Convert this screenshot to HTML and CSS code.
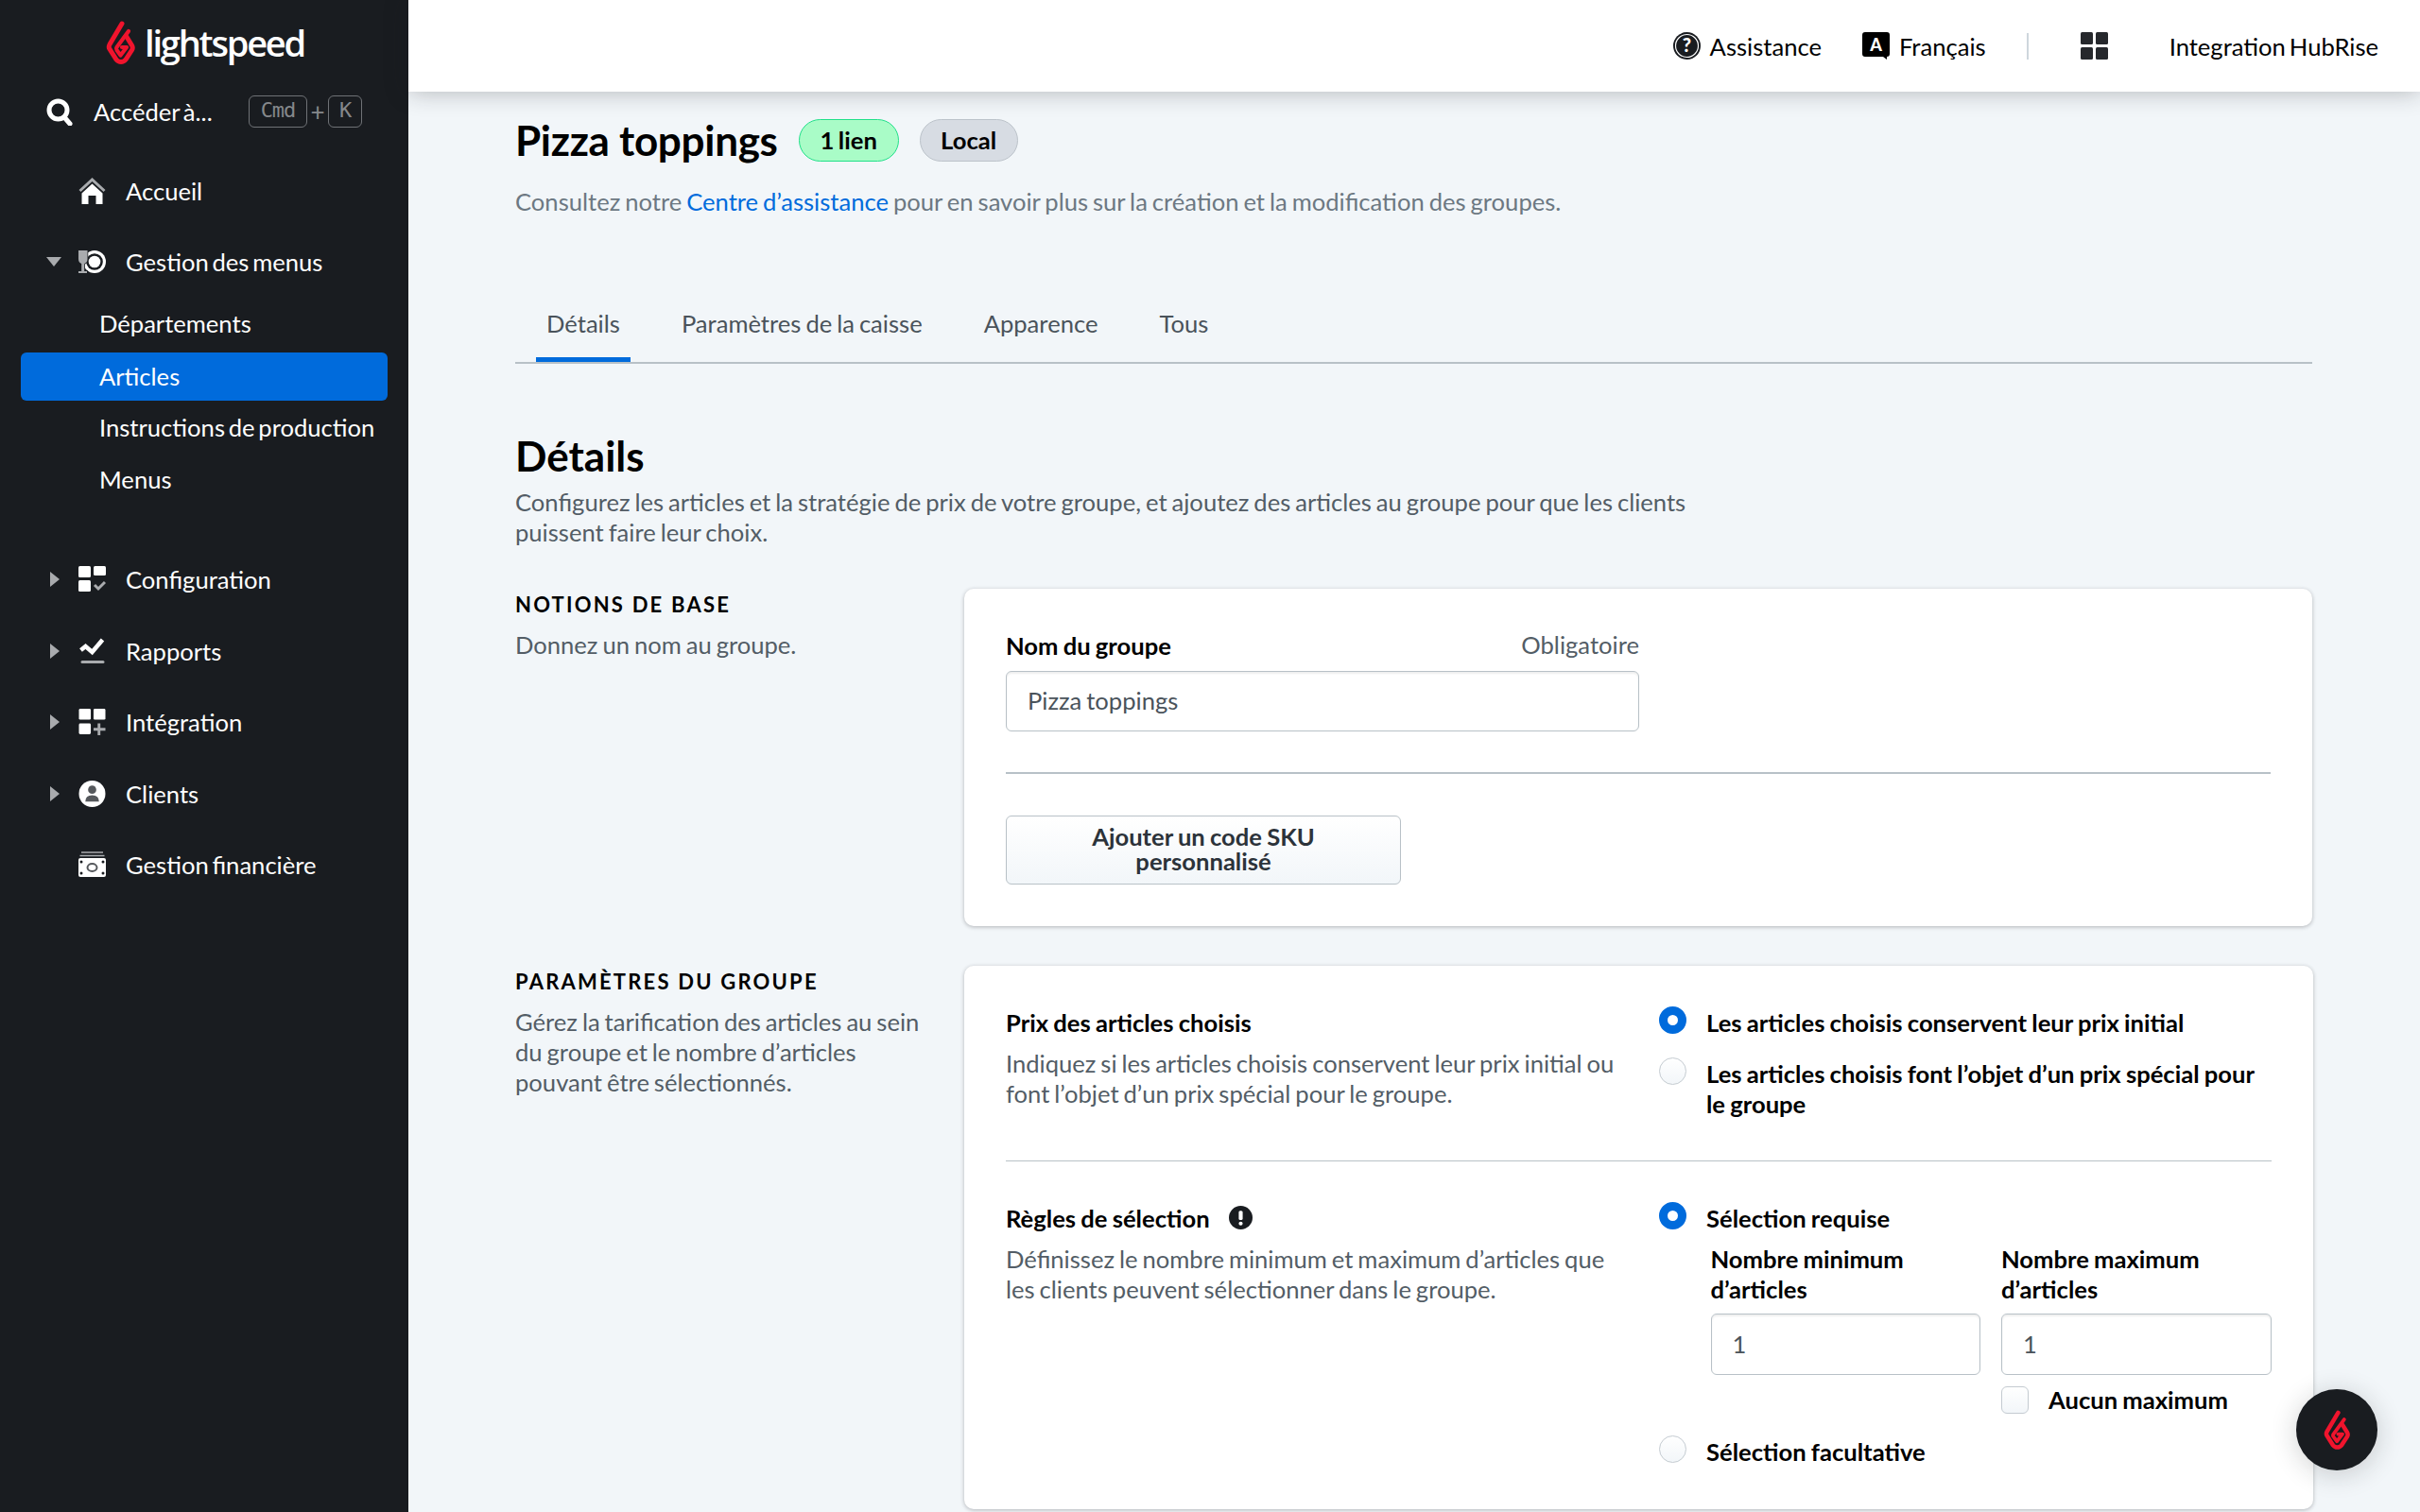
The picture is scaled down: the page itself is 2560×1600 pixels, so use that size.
FILE: index.html
```html
<!DOCTYPE html>
<html lang="fr">
<head>
<meta charset="utf-8">
<title>Pizza toppings</title>
<link rel="stylesheet" href="styles.css">
</head>
<body>
<aside class="sidebar">
  <div class="logo">
    <svg class="flame" viewBox="0 0 32 46"><path d="M17 3 4 25q-1.500 3 0 5l7 11q2 2.500 5 2.500t5-2.500l6.500-10q1.500-2.500 0-5L22 17" fill="none" stroke="#f0142d" stroke-width="5" stroke-linecap="round"/><path d="M24 11 11.500 28q-1 1.500 0 3l4 5.500L22 28h-5" fill="none" stroke="#f0142d" stroke-width="4.200" stroke-linecap="round" stroke-linejoin="round"/></svg>
    <span class="logo-text">lightspeed</span>
  </div>
  <div class="search">
    <svg class="search-icon" viewBox="0 0 28 29"><circle cx="12.500" cy="12.500" r="9.500" fill="none" stroke="#fff" stroke-width="5"/><path d="m19 20 6 7" stroke="#fff" stroke-width="5" stroke-linecap="round"/></svg>
    <span class="search-text">Accéder à...</span>
    <span class="kbd kbd-cmd">Cmd</span><span class="plus">+</span><span class="kbd kbd-k">K</span>
  </div>
  <nav class="nav">
    <a class="nav-row"><span class="caret"></span>
      <svg class="nav-icon" viewBox="0 0 28 28"><path d="M14 0 0 13l2 2L14 4l12 11 2-2z" fill="#a9abae"/><path d="M14 6.500 3 16.500V28h7v-9h8v9h7V16.500z" fill="#fff"/></svg>
      <span>Accueil</span></a>
    <a class="nav-row"><span class="caret down"></span>
      <svg class="nav-icon" viewBox="0 0 29 26"><circle cx="17" cy="13" r="12" fill="#fff"/><circle cx="17" cy="13" r="8.800" fill="#191c20"/><circle cx="17" cy="13" r="6.300" fill="#fff"/><path d="M0 1h9.500v9q0 4-3.300 5v8H9v2H0v-2h3.200v-8Q0 14 0 10z" fill="#a9abae" stroke="#191c20" stroke-width="1.500" paint-order="stroke"/></svg>
      <span>Gestion des menus</span></a>
    <div class="subnav">
      <a class="sub-row">Départements</a>
      <a class="sub-row active">Articles</a>
      <a class="sub-row">Instructions de production</a>
      <a class="sub-row">Menus</a>
    </div>
    <a class="nav-row"><span class="caret right"></span>
      <svg class="nav-icon" viewBox="0 0 29 28"><rect width="13" height="12" rx="1.500" fill="#fff"/><rect x="16" width="13" height="10" rx="1.500" fill="#fff"/><rect y="15" width="13" height="12" rx="1.500" fill="#fff"/><path d="m17 20 4 4 7-7" fill="none" stroke="#a9abae" stroke-width="3"/></svg>
      <span>Configuration</span></a>
    <a class="nav-row"><span class="caret right"></span>
      <svg class="nav-icon" viewBox="0 0 28 28"><path d="M2 13l5-4 7 6L25 2" fill="none" stroke="#fff" stroke-width="4.500"/><rect x="2" y="24" width="25" height="3" rx="1.500" fill="#a9abae"/></svg>
      <span>Rapports</span></a>
    <a class="nav-row"><span class="caret right"></span>
      <svg class="nav-icon" viewBox="0 0 29 29"><rect width="13" height="12" rx="1.500" fill="#fff"/><rect x="16" width="13" height="12" rx="1.500" fill="#fff"/><rect y="16" width="13" height="12" rx="1.500" fill="#fff"/><path d="M22 16v13M16 22.500h13" stroke="#a9abae" stroke-width="3"/></svg>
      <span>Intégration</span></a>
    <a class="nav-row"><span class="caret right"></span>
      <svg class="nav-icon" viewBox="0 0 29 29"><circle cx="14.500" cy="14.500" r="14.500" fill="#fff"/><circle cx="14.500" cy="10" r="4.500" fill="#55585c"/><path d="M7 23q0-7 7.500-7T22 23z" fill="#55585c"/></svg>
      <span>Clients</span></a>
    <a class="nav-row"><span class="caret"></span>
      <svg class="nav-icon" viewBox="0 0 29 28"><path d="M3 1h23M1.500 4.500h26" stroke="#a9abae" stroke-width="1.500"/><rect y="7" width="29" height="20" rx="2" fill="#fff"/><ellipse cx="14.500" cy="17" rx="5" ry="4" fill="none" stroke="#55585c" stroke-width="2"/><circle cx="3" cy="11" r="1.500" fill="#191c20"/><circle cx="26" cy="11" r="1.500" fill="#191c20"/><circle cx="3" cy="23" r="1.500" fill="#191c20"/><circle cx="26" cy="23" r="1.500" fill="#191c20"/></svg>
      <span>Gestion financière</span></a>
  </nav>
</aside>
<div class="page">
  <header class="topbar">
    <a class="top-item"><svg class="top-icon" viewBox="0 0 29 29"><circle cx="14.500" cy="14.500" r="14.500" fill="#191c20"/><circle cx="14.500" cy="14.500" r="12" fill="none" stroke="#fff" stroke-width="1.200"/><text class="help-glyph" x="14.500" y="21">?</text></svg><span>Assistance</span></a>
    <a class="top-item lang"><svg class="top-icon" viewBox="0 0 29 29"><path d="M3 0h23q3 0 3 3v20q0 3-3 3v3l-4-3H3q-3 0-3-3V3q0-3 3-3z" fill="#000"/><text class="lang-glyph" x="14.500" y="20">A</text></svg><span>Français</span></a>
    <span class="top-sep"></span>
    <svg class="top-grid" viewBox="0 0 29 29"><rect width="13" height="13" rx="1.500" fill="#26282c"/><rect x="16" width="13" height="13" rx="1.500" fill="#26282c"/><rect y="16" width="13" height="13" rx="1.500" fill="#26282c"/><rect x="16" y="16" width="13" height="13" rx="1.500" fill="#26282c"/></svg>
    <span class="account">Integration HubRise</span>
  </header>
  <main class="content">
    <div class="title-row">
      <h1 class="title">Pizza toppings</h1>
      <span class="pill pill-green">1 lien</span>
      <span class="pill pill-grey">Local</span>
    </div>
    <p class="intro">Consultez notre <a class="link">Centre d’assistance</a> pour en savoir plus sur la création et la modification des groupes.</p>
    <div class="tabs">
      <a class="tab current">Détails</a>
      <a class="tab">Paramètres de la caisse</a>
      <a class="tab">Apparence</a>
      <a class="tab">Tous</a>
    </div>
    <h2 class="section-title">Détails</h2>
    <p class="section-desc">Configurez les articles et la stratégie de prix de votre groupe, et ajoutez des articles au groupe pour que les clients puissent faire leur choix.</p>
    <section class="block block-basics">
      <div class="block-side">
        <h3 class="eyebrow">NOTIONS DE BASE</h3>
        <p class="side-text">Donnez un nom au groupe.</p>
      </div>
      <div class="card card-basics">
        <div class="field-head"><label class="strong">Nom du groupe</label><span class="muted">Obligatoire</span></div>
        <div class="input input-name">Pizza toppings</div>
        <hr class="rule-thick">
        <button class="btn">Ajouter un code SKU personnalisé</button>
      </div>
    </section>
    <section class="block block-settings">
      <div class="block-side">
        <h3 class="eyebrow">PARAMÈTRES DU GROUPE</h3>
        <p class="side-text">Gérez la tarification des articles au sein du groupe et le nombre d’articles pouvant être sélectionnés.</p>
      </div>
      <div class="card card-settings">
        <div class="setting price-setting">
          <div class="setting-info">
            <div class="strong">Prix des articles choisis</div>
            <p class="muted setting-text">Indiquez si les articles choisis conservent leur prix initial ou font l’objet d’un prix spécial pour le groupe.</p>
          </div>
          <div class="setting-ctrl">
            <div class="radio-row"><span class="radio on"></span><span class="strong">Les articles choisis conservent leur prix initial</span></div>
            <div class="radio-row second"><span class="radio"></span><span class="strong">Les articles choisis font l’objet d’un prix spécial pour le groupe</span></div>
          </div>
        </div>
        <hr class="rule-thin">
        <div class="setting rules-setting">
          <div class="setting-info">
            <div class="strong rule-title">Règles de sélection <svg class="info-icon" viewBox="0 0 24 24"><circle cx="12" cy="12" r="12" fill="#191c20"/><rect x="10" y="5" width="4" height="9.500" rx="1.500" fill="#fff"/><circle cx="12" cy="18" r="2" fill="#fff"/></svg></div>
            <p class="muted setting-text">Définissez le nombre minimum et maximum d’articles que les clients peuvent sélectionner dans le groupe.</p>
          </div>
          <div class="setting-ctrl">
            <div class="radio-row"><span class="radio on"></span><span class="strong">Sélection requise</span></div>
            <div class="limits">
              <div class="limit">
                <label class="strong limit-label">Nombre minimum d’articles</label>
                <div class="input input-num">1</div>
              </div>
              <div class="limit">
                <label class="strong limit-label">Nombre maximum d’articles</label>
                <div class="input input-num">1</div>
                <div class="check-row"><span class="check"></span><span class="strong">Aucun maximum</span></div>
              </div>
            </div>
            <div class="radio-row last"><span class="radio"></span><span class="strong">Sélection facultative</span></div>
          </div>
        </div>
      </div>
    </section>
  </main>
</div>
<button class="fab" aria-label="Lightspeed"><svg class="fab-flame" viewBox="0 0 32 46"><path d="M17 3 4 25q-1.500 3 0 5l7 11q2 2.500 5 2.500t5-2.500l6.500-10q1.500-2.500 0-5L22 17" fill="none" stroke="#f0142d" stroke-width="5" stroke-linecap="round"/><path d="M24 11 11.500 28q-1 1.500 0 3l4 5.500L22 28h-5" fill="none" stroke="#f0142d" stroke-width="4.200" stroke-linecap="round" stroke-linejoin="round"/></svg></button>
</body>
</html>
```
FILE: styles.css
```css
* { box-sizing: border-box; }
html, body { margin: 0; height: 100%; }
body {
  display: flex; width: 2560px; height: 1600px; overflow: hidden;
  font-family: Lato, "Open Sans", sans-serif; font-size: 25.600px; word-spacing: -1.600px; color: #000;
  background: #f2f6f9; position: relative;
}
p, h1, h2, h3 { margin: 0; }
a { color: inherit; text-decoration: none; }

.sidebar { width: 432px; flex: none; height: 100%; background: #191c20; color: #fff; word-spacing: -2.800px; }
.logo { height: 100px; padding: 22px 0 0 112px; display: flex; align-items: flex-start; }
.flame { width: 32px; height: 46px; flex: none; }
.logo-text { font-family: "Open Sans", sans-serif; font-size: 38px; font-weight: 600; line-height: 46px; margin-left: 9px; letter-spacing: -2.200px; }
.search { display: flex; align-items: center; height: 36px; padding-left: 49px; }
.search-icon { width: 28px; height: 29px; flex: none; }
.search-text { margin-left: 22px; width: 164px; white-space: nowrap; }
.kbd { border: 1px solid #6f7276; border-radius: 6px; height: 34px; color: #85888b; font-family: "DejaVu Sans Mono", monospace; font-size: 22px; letter-spacing: -1px; line-height: 30px; text-align: center; }
.kbd-cmd { width: 62px; }
.kbd-k { width: 36px; }
.plus { width: 22px; text-align: center; color: #85888b; font-size: 26px; }
.nav { padding-top: 28px; }
.nav-row { display: flex; align-items: center; height: 75.500px; padding-left: 49px; }
.caret { width: 34px; flex: none; height: 0; }
.caret.down { border-top: 10px solid #a9abae; border-left: 8px solid transparent; border-right: 8px solid transparent; width: 16px; margin-right: 18px; }
.caret.right { border-left: 10px solid #a9abae; border-top: 8px solid transparent; border-bottom: 8px solid transparent; height: 16px; width: 10px; margin: 0 20px 0 4px; }
.nav-icon { width: 29px; height: 28px; flex: none; margin-right: 21px; }
.subnav { padding: 1.500px 22px 38px; display: flex; flex-direction: column; }
.sub-row { height: 55.300px; line-height: 51px; padding-left: 83px; border-radius: 6px; }
.sub-row.active { background: #006bdc; height: 51px; margin: 1px 0 3.300px; }

.page { flex: 1; min-width: 0; display: flex; flex-direction: column; }
.topbar { height: 97px; flex: none; background: #fff; display: flex; align-items: center; padding-right: 44px; justify-content: flex-end; box-shadow: 0 0 24px rgba(25,28,32,.3); position: relative; z-index: 1; }
.top-item { display: flex; align-items: center; gap: 10px; }
.top-icon { width: 29px; height: 29px; flex: none; }
.help-glyph { font: 900 20px Lato, sans-serif; fill: #fff; text-anchor: middle; }
.lang-glyph { font: 900 18px Lato, sans-serif; fill: #fff; text-anchor: middle; }
.lang { margin-left: 43px; }
.top-sep { width: 2px; height: 28px; background: #ced6dd; margin: 0 55px 0 43px; }
.top-grid { width: 29px; height: 29px; flex: none; margin-right: 65px; }
.account { word-spacing: -2.600px; }

.content { padding: 29px 114px 0 113px; }
.title-row { display: flex; align-items: center; height: 45px; }
.title { font-size: 44px; font-weight: 700; line-height: 45px; margin-right: 22px; letter-spacing: -.3px; word-spacing: 0; }
.pill { height: 45px; border-radius: 23px; border: 1px solid; font-weight: 700; line-height: 42px; text-align: center; }
.pill-green { width: 106px; background: #a9fcc7; border-color: #22e08a; margin-right: 22px; }
.pill-grey { width: 104px; background: #d7dce3; border-color: #bcc3ca; }
.intro { color: #6c7882; margin-top: 26px; line-height: 32px; }
.link { color: #006bdc; }
.tabs { display: flex; margin-top: 74px; height: 82px; border-bottom: 2px solid #b8c1c7; padding-left: 22px; }
.tab { padding: 0 11px; margin-right: 43px; height: 80px; line-height: 78px; color: #4a535b; }
.tab.current { border-bottom: 5px solid #006bdc; }

.section-title { font-size: 44px; font-weight: 700; line-height: 56px; margin-top: 69px; }
.section-desc { color: #535d66; line-height: 32px; width: 1250px; margin-top: 5px; }
.block { display: flex; }
.block-basics { margin-top: 44px; }
.block-settings { margin-top: 42px; }
.block-side { width: 475px; flex: none; padding: 4px 40px 0 0; }
.eyebrow { font-size: 22px; font-weight: 700; letter-spacing: 2.200px; word-spacing: 0; line-height: 26px; }
.side-text { color: #535d66; line-height: 32px; margin-top: 13px; }
.card { flex: 1; background: #fff; border-radius: 10px; box-shadow: 0 1px 4px rgba(25,28,32,.3); padding: 44px; }
.strong { font-weight: 700; line-height: 32px; word-spacing: -1px; }
.muted { color: #535d66; }
.field-head { display: flex; justify-content: space-between; width: 670px; line-height: 30px; height: 31px; }
.input { border: 1px solid #b8c1c7; border-radius: 6px; background: #fff; color: #4a535b; box-shadow: inset 0 2px 2px rgba(25,28,32,.07); padding-left: 22px; }
.input-name { width: 670px; height: 64px; line-height: 61px; margin-top: 11.500px; }
.rule-thick { border: 0; height: 2px; background: #b8c1c7; margin: 43px 0 44px; }
.btn { display: block; width: 418px; height: 73px; padding: 0 30px 2px; border: 1px solid #b8c1c7; border-radius: 6px; background: linear-gradient(#fff, #f2f6f9); font: 700 25.600px/26px Lato, sans-serif; word-spacing: -1px; color: #2c333a; }
.card-settings { padding-bottom: 0; height: 575px; }
.setting { display: flex; }
.setting-info { width: 691px; flex: none; }
.setting-text { line-height: 32px; margin-top: 11px; width: 652px; }
.setting-ctrl { flex: 1; min-width: 0; }
.price-setting { height: 162px; }
.radio-row { display: flex; align-items: flex-start; gap: 21px; }
.radio-row.second { margin-top: 22px; }
.radio-row.last { margin-top: 23.500px; }
.radio { width: 29px; height: 29px; flex: none; border-radius: 50%; border: 1px solid #c4cbd1; background: linear-gradient(#fff, #f2f6f9); margin-top: -1px; }
.radio.on { border: 9px solid #006bdc; background: #fff; }
.rule-thin { border: 0; height: 1px; background: #b8c1c7; margin: 0 0 44px; }
.rule-title { display: flex; align-items: center; gap: 20px; }
.info-icon { width: 25px; height: 25px; }
.limits { display: flex; gap: 22px; padding-left: 54.500px; margin-top: 11px; }
.limit { width: 285.500px; }
.limit-label { display: block; width: 230px; }
.input-num { height: 65px; line-height: 63px; margin-top: 10px; }
.check-row { display: flex; gap: 21px; margin-top: 11.500px; height: 30px; align-items: center; }
.check { width: 29px; height: 29px; flex: none; border: 1px solid #c4cbd1; border-radius: 6px; background: linear-gradient(#fff, #f2f6f9); }
.fab { position: absolute; left: 2429px; top: 1470px; width: 86px; height: 86px; border-radius: 50%; border: 0; background: #191c20; box-shadow: 0 4px 28px rgba(25,28,32,.2); padding: 0; display: flex; align-items: center; justify-content: center; }
.fab-flame { width: 29px; height: 42px; }
```
